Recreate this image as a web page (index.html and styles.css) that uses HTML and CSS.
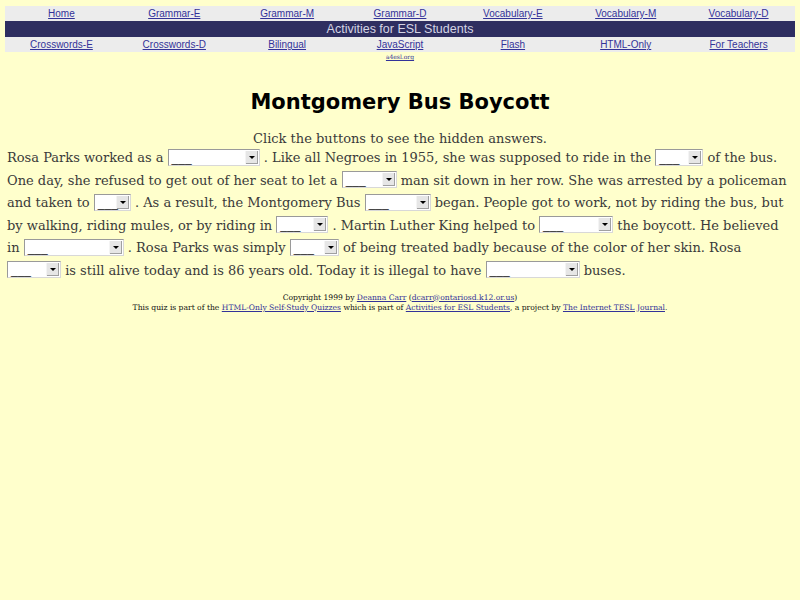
FILE: index.html
```html
<!DOCTYPE html>
<html>
<head>
<meta charset="utf-8">
<title>Montgomery Bus Boycott</title>
<link rel="stylesheet" href="styles.css">
</head>
<body>
<div class="nav">
  <div class="navrow">
    <a href="#">Home</a><a href="#">Grammar-E</a><a href="#">Grammar-M</a><a href="#">Grammar-D</a><a href="#">Vocabulary-E</a><a href="#">Vocabulary-M</a><a href="#">Vocabulary-D</a>
  </div>
  <div class="band">Activities for ESL Students</div>
  <div class="navrow">
    <a href="#">Crosswords-E</a><a href="#">Crosswords-D</a><a href="#">Bilingual</a><a href="#">JavaScript</a><a href="#">Flash</a><a href="#">HTML-Only</a><a href="#">For Teachers</a>
  </div>
</div>
<div class="site"><a href="#">a4esl.org</a></div>

<h1 class="title">Montgomery Bus Boycott</h1>

<p class="intro">Click the buttons to see the hidden answers.</p>
<p class="quiz">Rosa Parks worked as a <span class="sel w92"><span class="val">___</span><span class="btn"></span></span> . Like all Negroes in 1955, she was supposed to ride in the <span class="sel w48"><span class="val">___</span><span class="btn"></span></span> of the bus.<br>One day, she refused to get out of her seat to let a <span class="sel w55"><span class="val">___</span><span class="btn"></span></span> man sit down in her row. She was arrested by a policeman<br>and taken to <span class="sel w37"><span class="val">___</span><span class="btn"></span></span> . As a result, the Montgomery Bus <span class="sel w66"><span class="val">___</span><span class="btn"></span></span> began. People got to work, not by riding the bus, but<br>by walking, riding mules, or by riding in <span class="sel w52"><span class="val">___</span><span class="btn"></span></span> . Martin Luther King helped to <span class="sel w74"><span class="val">___</span><span class="btn"></span></span> the boycott. He believed<br>in <span class="sel w100"><span class="val">___</span><span class="btn"></span></span> . Rosa Parks was simply <span class="sel w49"><span class="val">___</span><span class="btn"></span></span> of being treated badly because of the color of her skin. Rosa<br><span class="sel w54"><span class="val">___</span><span class="btn"></span></span> is still alive today and is 86 years old. Today it is illegal to have <span class="sel w94"><span class="val">___</span><span class="btn"></span></span> buses.</p>

<div class="footer">
  <div>Copyright 1999 by <a href="#">Deanna Carr</a> (<a href="#">dcarr@ontariosd.k12.or.us</a>)</div>
  <div>This quiz is part of the <a href="#">HTML-Only Self-Study Quizzes</a> which is part of <a href="#">Activities for ESL Students</a>, a project by <a href="#">The Internet TESL Journal</a>.</div>
</div>
</body>
</html>
```
FILE: styles.css
```css
html, body {
  background: #ffffcc;
}
body {
  margin: 6px 5px;
  font-family: "DejaVu Serif", serif;
  color: #3a3a3a;
}
.nav {
  font-family: "Liberation Sans", Arial, sans-serif;
  font-size: 10px;
}
.navrow {
  display: grid;
  grid-template-columns: repeat(7, 1fr);
  background: #ececec;
  height: 15px;
  align-items: center;
  text-align: center;
}
.navrow a {
  color: #333399;
}
.band {
  background: #2e2e60;
  color: #d4d4e4;
  font-size: 12.5px;
  height: 16px;
  line-height: 16px;
  text-align: center;
}
.site {
  text-align: center;
  font-family: "DejaVu Serif", serif;
  font-size: 6px;
  line-height: 10px;
  margin-top: 0;
}
.site a { color: #333399; }
.title {
  font-family: "DejaVu Sans", sans-serif;
  font-weight: bold;
  font-size: 21px;
  color: #000;
  text-align: center;
  margin: 26px 0 0;
  line-height: 28px;
}
.intro {
  text-align: center;
  font-size: 13px;
  margin: 15px 0 0;
  line-height: 16px;
}
.quiz {
  font-size: 13px;
  line-height: 22.6px;
  margin: 0;
  padding-left: 2px;
  white-space: nowrap;
}
.sel {
  display: inline-block;
  vertical-align: middle;
  height: 17px;
  box-sizing: border-box;
  border: 1px solid #9a9a9a;
  border-right-color: #d8d8d8;
  border-bottom-color: #d8d8d8;
  background: #fff;
  position: relative;
  margin-top: -3px;
}
.sel .val {
  position: absolute;
  left: 3px;
  bottom: 0;
  font-size: 12px;
  line-height: 14px;
  color: #333;
  font-family: "Liberation Sans", sans-serif;
}
.sel .btn {
  position: absolute;
  right: 1px;
  top: 1px;
  bottom: 1px;
  width: 12px;
  background: #e6e6e6;
  border-left: 1px solid #f4f4f4;
  box-shadow: inset -1px -1px 0 #a0a0a0;
}
.sel .btn::after {
  content: "";
  position: absolute;
  left: 3px;
  top: 5px;
  border-left: 3px solid transparent;
  border-right: 3px solid transparent;
  border-top: 3px solid #000;
}
.w92 { width: 92px; }
.w48 { width: 48px; }
.w55 { width: 55px; }
.w37 { width: 37px; }
.w66 { width: 66px; }
.w52 { width: 52px; }
.w74 { width: 74px; }
.w100 { width: 100px; }
.w49 { width: 49px; }
.w54 { width: 54px; }
.w94 { width: 94px; }
.footer {
  margin-top: 10px;
  text-align: center;
  font-family: "DejaVu Serif", serif;
  font-size: 7.6px;
  line-height: 10px;
  color: #111;
}
.footer a { color: #333399; }
```
